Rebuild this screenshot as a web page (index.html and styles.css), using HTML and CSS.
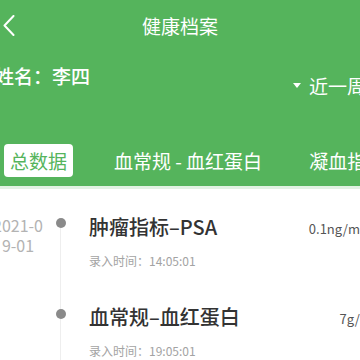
FILE: index.html
```html
<!DOCTYPE html>
<html lang="zh-CN">
<head>
    <meta charset="UTF-8">
    <meta name="viewport" content="width=device-width, initial-scale=1.0">
    <title>健康档案</title>
    <link rel="stylesheet" href="styles.css">
</head>
<body>
    <div class="header">
        <div class="topbar">
            <a class="back" href="#">
                <svg width="12" height="21" viewBox="0 0 12 21"><polyline points="10.5,1 1.5,10.5 10.5,20" fill="none" stroke="#fff" stroke-width="2" stroke-linecap="round" stroke-linejoin="round"/></svg>
            </a>
            <h1>健康档案</h1>
            <span></span>
        </div>
        <div class="profile">
            <div class="name">姓名：李四</div>
            <div class="range"><span class="caret"></span>近一周</div>
        </div>
        <div class="tabs">
            <span class="tab active">总数据</span>
            <span class="tab">血常规 - 血红蛋白</span>
            <span class="tab">凝血指标</span>
        </div>
    </div>

    <div class="records">
        <div class="record first">
            <div class="date">2021-09-01</div>
            <div class="axis"><span class="dot"></span></div>
            <div class="info">
                <div class="row">
                    <div class="title">肿瘤指标–PSA</div>
                    <div class="value">0.1ng/mL</div>
                </div>
                <div class="time">录入时间：14:05:01</div>
            </div>
        </div>
        <div class="record">
            <div class="date"></div>
            <div class="axis"><span class="dot"></span></div>
            <div class="info">
                <div class="row">
                    <div class="title">血常规–血红蛋白</div>
                    <div class="value">7g/L</div>
                </div>
                <div class="time">录入时间：19:05:01</div>
            </div>
        </div>
    </div>
</body>
</html>
```

FILE: styles.css
```css
body {
    margin: 0;
    width: 360px;
    height: 360px;
    overflow: hidden;
    background: #fff;
    font-family: 'Noto Sans CJK SC', 'Noto Sans', sans-serif;
}
.header {
    background-color: #55b45c;
    color: #fff;
    border-bottom: 3px solid #e2f2e3;
}
.topbar {
    display: grid;
    grid-template-columns: 1fr auto 1fr;
    align-items: center;
    height: 50px;
    padding: 0 3px;
}
.back {
    display: flex;
    width: 14px;
}
h1 {
    margin: 0;
    font-size: 19px;
    font-weight: 400;
    line-height: 1;
}
.profile {
    display: flex;
    justify-content: space-between;
    align-items: flex-start;
    height: 86px;
    padding-top: 16px;
    box-sizing: border-box;
    font-size: 19px;
    line-height: 1;
}
.name {
    margin-left: -5px;
    font-weight: 500;
}
.range {
    display: flex;
    align-items: center;
    gap: 8px;
    margin-top: 10px;
    margin-right: -6px;
}
.caret {
    width: 0;
    height: 0;
    border-left: 4.5px solid transparent;
    border-right: 4.5px solid transparent;
    border-top: 5px solid #fff;
}
.tabs {
    display: flex;
    gap: 35px;
    padding: 8px 0 9px 4px;
    white-space: nowrap;
    overflow: hidden;
}
.tab {
    padding: 0 6px;
    font-size: 19px;
    line-height: 33px;
    border-radius: 4px;
}
.tab.active {
    background: #fff;
    color: #55b45c;
}
.records {
    padding-top: 26px;
}
.record {
    display: flex;
    padding-bottom: 36px;
}
.date {
    flex: none;
    width: 56px;
    margin-left: -10px;
    text-align: center;
    font-size: 16px;
    line-height: 20px;
    color: #b3b3b3;
    word-break: break-all;
}
.axis {
    flex: none;
    width: 30px;
    margin-right: 13px;
    position: relative;
}
.axis::before {
    content: "";
    position: absolute;
    left: 14px;
    top: -36px;
    bottom: -36px;
    width: 1px;
    background: #eeeeee;
}
.record.first .axis::before {
    top: 6px;
}
.dot {
    position: absolute;
    left: 9.5px;
    top: 4px;
    width: 10px;
    height: 10px;
    border-radius: 50%;
    background: #8a8a8a;
}
.record.first .dot {
    top: 3px;
}
.info {
    flex: 1;
    margin-right: -7px;
}
.row {
    display: flex;
    justify-content: space-between;
    align-items: flex-start;
}
.title {
    font-size: 20px;
    line-height: 24px;
    font-weight: 500;
    color: #333;
}
.value {
    font-size: 13px;
    line-height: 20px;
    color: #555;
    margin-top: 4px;
}
.time {
    margin-top: 14px;
    font-size: 12px;
    line-height: 16px;
    color: #a3a3a3;
}
```
